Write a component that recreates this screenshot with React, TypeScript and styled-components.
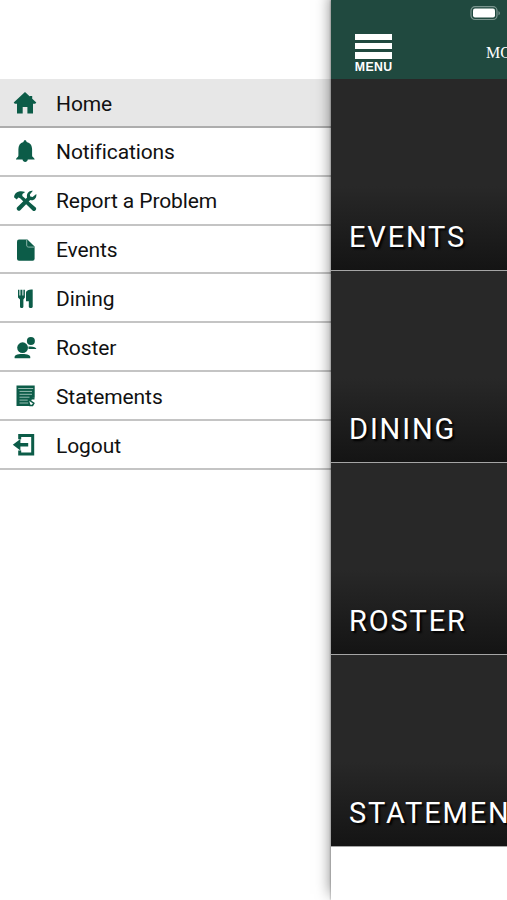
import React from 'react';
import styled, { createGlobalStyle } from 'styled-components';

const GlobalStyle = createGlobalStyle`
  * { box-sizing: border-box; }
  body { margin: 0; background: #fff; font-family: Roboto, "Liberation Sans", sans-serif; }
`;

const Screen = styled.div`
  display: flex;
  width: 507px;
  height: 900px;
  overflow: hidden;
  background: #fff;
`;

const Drawer = styled.nav`
  flex: 0 0 331px;
  padding-top: 79px;
`;

const MenuItem = styled.a<{ $active?: boolean }>`
  display: flex;
  align-items: center;
  height: 48.85px;
  padding-left: 12px;
  gap: 18px;
  border-bottom: 2px solid ${p => (p.$active ? '#adadad' : '#c4c4c4')};
  background: ${p => (p.$active ? '#e7e7e7' : '#fff')};
  color: #111;
  font-size: 21px;
  line-height: 24px;
  letter-spacing: -0.1px;
`;

const ItemLabel = styled.span`
  padding-top: 2.4px;
`;

const ItemIcon = styled.svg`
  flex: none;
  width: 26px;
  height: 26px;
  margin-top: 2px;
  fill: #0c5c48;
  stroke: none;
`;

const Page = styled.main`
  flex: 0 0 176px;
  min-width: 0;
  z-index: 1;
  background: #fff;
  box-shadow: 0 -6px 14px rgba(0, 0, 0, 0.5), 0 0 2px rgba(0, 0, 0, 0.45);
`;

const Header = styled.header`
  height: 79px;
  overflow: hidden;
  background: #20493f;
  color: #fff;
`;

const StatusBar = styled.div`
  display: flex;
  justify-content: flex-end;
  height: 33px;
  padding: 5px 6px 0 0;
`;

const TitleBar = styled.div`
  display: flex;
  justify-content: space-between;
`;

const MenuButton = styled.div`
  display: flex;
  flex-direction: column;
  align-items: center;
  gap: 3px;
  width: 37px;
  margin-left: 24px;
  padding-top: 1px;
`;

const Bar = styled.span`
  width: 37px;
  height: 6.2px;
  background: #fff;
`;

const MenuLabel = styled.span`
  font: bold 11.5px/11px "Liberation Sans", sans-serif;
  letter-spacing: 0.35px;
  transform: scale(1.07, 1.03);
`;

const ClubName = styled.span`
  width: 21px;
  padding-top: 11px;
  overflow: hidden;
  font: 16px/18px "Liberation Serif", serif;
  white-space: nowrap;
`;

const Tile = styled.section`
  display: flex;
  align-items: flex-end;
  height: 191.9px;
  padding: 0 0 16px 18px;
  overflow: hidden;
  border-bottom: 1px solid #a5a5a5;
  background: linear-gradient(#282828 0%, #282828 56%, #141414 100%);
  color: #fff;
  font-size: 29px;
  line-height: 34px;
  letter-spacing: 1.85px;
  white-space: nowrap;
  text-shadow: 2px 2px 2px #000;
`;

const icons: Record<string, React.ReactNode> = {
  Home: <path d="M13 2 1.7 12.6l1.1 1.2H5V23.5h5.7V17h4.7v6.5H21v-9.7h2.2l1.1-1.2-4.1-3.9V6h-2.4v.5z" />,
  Notifications: <path d="M13 1.2c1 0 1.5.7 1.6 1.7 3.8.8 5.5 3.5 5.5 7.3v6.2c0 1.9 2.6 2 2.6 4.2H15.8c-.3 3.1-4.9 3.1-5.3 0H3.9c0-2.2 2.5-2.3 2.5-4.2v-6.2c0-3.8 1.6-6.5 5.1-7.3.1-1 .6-1.7 1.5-1.7z" />,
  'Report a Problem': (
    <>
      <path d="M2 9.2c.2-3 2-5.2 5-5.8 2.1-.5 4.3-.1 6.2.6L10.4 6l-.1 1.9L23.7 19.4c1.6 1.8-1 4.8-3.1 3L8.1 10.3 6.4 9.6 4.7 11.4z" />
      <path d="M20.9 2.8 17.8 6.4l.5 2.1 2.3.5L24.3 6c.7 3.7-2.3 7.3-6.1 6.1L8.3 22.2c-1.8 1.8-4.8-1-3.1-2.9L15.1 9.4c-1-3.7 2.1-7.3 5.8-6.6z" />
    </>
  ),
  Events: (
    <>
      <path d="M7 2.5h8.4l7.2 7v12.2a2 2 0 0 1-2 2H7a2 2 0 0 1-2-2V4.5a2 2 0 0 1 2-2z" />
      <path d="M14.7 2.7V8c0 1.5.6 2.1 2.1 2.1h5.5" fill="none" stroke="#8ab4a8" strokeWidth="1" />
    </>
  ),
  Dining: (
    <>
      <path d="M6 3.8h1.4v5.8h1V3.8h2v5.8h1V3.8h1.5v7.8l-1.5 2v6.8c0 2-3.4 2-3.4 0v-6.8l-2-2z" />
      <path d="M20.7 3.6v17.2c0 1.6-3.9 1.6-3.9 0v-5.6H14V7.1c0-2.2 2-3.5 6.7-3.5z" />
    </>
  ),
  Roster: (
    <>
      <circle cx="10.6" cy="12.7" r="5.4" />
      <circle cx="18.9" cy="6" r="4" />
      <path d="M2.7 23.3c-.8-3.1 2.2-4.2 7.5-4.2s9 1.1 8 4.2zM16.4 11.5c4.3-.4 7.6.3 8 2.6h-7.9z" />
    </>
  ),
  Statements: (
    <>
      <path d="M4.5 2.5h18.2v12.3l-3 .2-2.3 3.4 1.4 4.7H4.5z" />
      <path d="M6.2 5.5h15M7.5 8.4h12.5M7.5 11.3h12.5M7.5 14.2h10M7.5 17.1h8.2M7.5 20h8.7" fill="none" stroke="#a8c7be" strokeWidth=".9" />
      <path d="M22.5 15.6h-3.2l-1 2.2 3.5 2.4-1.3 2.3h-3.2" fill="none" stroke="#0c5c48" strokeWidth="1.6" />
    </>
  ),
  Logout: <path d="M6.2 2h16v21.5h-16v-5h3v2.1h10V5h-10v2.2h-3zM8.4 7v4.1h7.8v3.4H8.4v4.1L.8 12.8z" />,
};

const labels = ['Home', 'Notifications', 'Report a Problem', 'Events', 'Dining', 'Roster', 'Statements', 'Logout'];
const tiles = ['EVENTS', 'DINING', 'ROSTER', 'STATEMENTS'];

export default function App() {
  return (
    <>
      <GlobalStyle />
      <Screen>
        <Drawer>
          {labels.map((label, i) => (
            <MenuItem key={label} $active={i === 0}>
              <ItemIcon viewBox="0 0 26 26">{icons[label]}</ItemIcon>
              <ItemLabel>{label}</ItemLabel>
            </MenuItem>
          ))}
        </Drawer>
        <Page>
          <Header>
            <StatusBar>
              <svg width="31" height="16" viewBox="0 0 31 16">
                <rect x="1" y="1.7" width="26" height="12.8" rx="4" fill="none" stroke="#7b958f" strokeWidth="1.2" />
                <rect x="3" y="3.6" width="22" height="9" rx="2" fill="#fff" />
                <path d="M28.5 6v4.3c1.9-.8 1.9-3.5 0-4.3z" fill="#7b958f" />
              </svg>
            </StatusBar>
            <TitleBar>
              <MenuButton>
                <Bar />
                <Bar />
                <Bar />
                <MenuLabel>MENU</MenuLabel>
              </MenuButton>
              <ClubName>MO</ClubName>
            </TitleBar>
          </Header>
          {tiles.map(name => (
            <Tile key={name}>{name}</Tile>
          ))}
        </Page>
      </Screen>
    </>
  );
}
